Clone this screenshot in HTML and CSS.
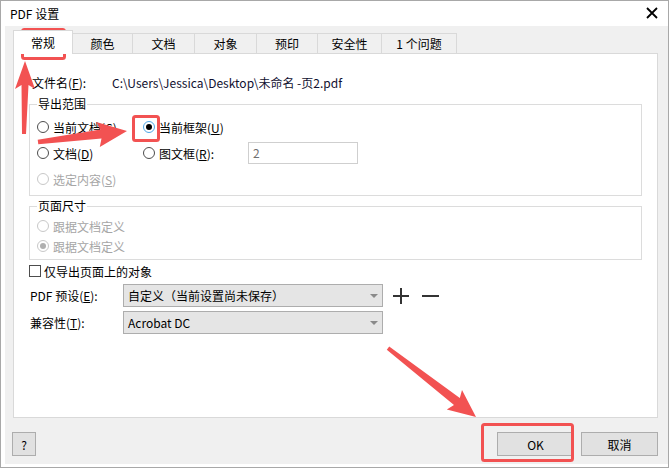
FILE: index.html
```html
<!DOCTYPE html>
<html lang="zh-CN">
<head>
    <meta charset="UTF-8">
    <title>PDF 设置</title>
    <link rel="stylesheet" href="styles.css">
</head>
<body>
    <div class="window">
        <div class="titlebar">
            <span class="title">PDF 设置</span>
            <svg class="close" width="12" height="12" viewBox="0 0 12 12">
                <path d="M1 1 L11 11 M11 1 L1 11" stroke="#000" stroke-width="1.8" fill="none"/>
            </svg>
        </div>
        <div class="client">
            <div class="tabs">
                <div class="tab active" style="width:60px">常规</div>
                <div class="tab" style="width:61px">颜色</div>
                <div class="tab" style="width:63px">文档</div>
                <div class="tab" style="width:63px">对象</div>
                <div class="tab" style="width:62px">预印</div>
                <div class="tab" style="width:65px">安全性</div>
                <div class="tab" style="width:76px">1 个问题</div>
            </div>
            <div class="panel">
                <div class="file-row">
                    <span class="file-label">文件名(<u>F</u>):</span>
                    <span class="path">C:\Users\Jessica\Desktop\未命名 -页2.pdf</span>
                </div>

                <fieldset class="group range">
                    <legend>导出范围</legend>
                    <div class="opt-row">
                        <label class="radio col1"><span class="circle"></span>当前文档(<u>C</u>)</label>
                        <label class="radio checked focus"><span class="circle"></span>当前框架(<u>U</u>)</label>
                    </div>
                    <div class="opt-row">
                        <label class="radio col1"><span class="circle"></span>文档(<u>D</u>)</label>
                        <label class="radio frame"><span class="circle"></span>图文框(<u>R</u>):</label>
                        <div class="textbox">2</div>
                    </div>
                    <div class="opt-row">
                        <label class="radio disabled"><span class="circle"></span>选定内容(<u>S</u>)</label>
                    </div>
                </fieldset>

                <fieldset class="group size">
                    <legend>页面尺寸</legend>
                    <div class="opt-row small">
                        <label class="radio disabled"><span class="circle"></span>跟据文档定义</label>
                    </div>
                    <div class="opt-row small">
                        <label class="radio disabled checked"><span class="circle"></span>跟据文档定义</label>
                    </div>
                </fieldset>

                <label class="check-row"><span class="checkbox"></span>仅导出页面上的对象</label>

                <div class="field-row preset">
                    <span class="field-label">PDF 预设(<u>E</u>):</span>
                    <div class="select"><span>自定义（当前设置尚未保存）</span><span class="arrow"></span></div>
                    <svg class="tool" width="16" height="16" viewBox="0 0 16 16">
                        <path d="M0 8 H16 M8 0 V16" stroke="#333" stroke-width="2"/>
                    </svg>
                    <svg class="tool" width="17" height="16" viewBox="0 0 17 16">
                        <path d="M0 8 H17" stroke="#333" stroke-width="2"/>
                    </svg>
                </div>
                <div class="field-row compat">
                    <span class="field-label">兼容性(<u>T</u>):</span>
                    <div class="select"><span>Acrobat DC</span><span class="arrow"></span></div>
                </div>
            </div>
            <div class="buttons">
                <button class="btn help">?</button>
                <div class="spacer"></div>
                <button class="btn">OK</button>
                <button class="btn">取消</button>
            </div>
        </div>

        <!-- screenshot annotations -->
        <svg class="marks" width="669" height="468" viewBox="0 0 669 468">
            <g fill="none" stroke="#f25252" stroke-width="3">
                <rect x="22.5" y="29.5" width="42" height="29" rx="2"/>
                <rect x="133.5" y="116.5" width="25" height="24" rx="2"/>
                <rect x="482.5" y="424.5" width="90" height="36" rx="2"/>
            </g>
            <g fill="#f25252">
                <polygon points="25,61 35,89 28.5,85 26,134 22,134 21.5,85 15,89"/>
                <polygon points="127,131 99.8,146.9 101.5,138.6 38.3,144.2 37.7,139.8 100.4,129.6 96.3,122.1"/>
                <polygon points="476,417 446.8,409.5 454,405 386.8,349.8 389.2,346.6 459.8,398 462,390"/>
            </g>
        </svg>
    </div>
</body>
</html>
```

FILE: styles.css
```css
body {
    margin: 0;
    font-family: "Noto Sans CJK SC", "Noto Sans", sans-serif;
    font-size: 12px;
    color: #000;
}
.window {
    position: relative;
    width: 669px;
    height: 468px;
    box-sizing: border-box;
    border: 1px solid #a8a8a8;
    background-color: #fff;
    display: flex;
    flex-direction: column;
}
.titlebar {
    height: 25px;
    display: flex;
    align-items: center;
    justify-content: space-between;
    padding: 0 10px 0 9px;
}
.title {
    font-size: 12px;
}
.close {
    margin-top: -1px;
}
.client {
    flex: 1;
    margin: 0 0 3px 4px;
    background-color: #f0f0f0;
    padding: 4px 10px 0 8px;
    display: flex;
    flex-direction: column;
}
.tabs {
    display: flex;
    align-items: flex-start;
    height: 24px;
}
.tab {
    box-sizing: border-box;
    height: 21px;
    margin-top: 3px;
    margin-left: -1px;
    border: 1px solid #d9d9d9;
    border-bottom: none;
    background-color: #f0f0f0;
    text-align: center;
    line-height: 19px;
}
.tab.active {
    position: relative;
    z-index: 1;
    height: 24px;
    margin-top: 0;
    margin-left: 0;
    background-color: #fff;
    line-height: 24px;
}
.panel {
    box-sizing: border-box;
    height: 365px;
    margin-top: -1px;
    border: 1px solid #d9d9d9;
    background-color: #fff;
}
.file-row {
    display: flex;
    height: 16px;
    line-height: 16px;
    margin: 21px 0 0 18px;
}
.file-label {
    width: 80px;
}
.path {
    color: #101030;
}
.group {
    box-sizing: border-box;
    width: 613px;
    margin: 0 0 0 15px;
    padding: 2px 7px 3px 7px;
    border: 1px solid #dcdcdc;
    min-inline-size: 0;
}
.group legend {
    padding: 0 1px;
    line-height: 16px;
}
.range {
    margin-top: 5px;
}
.size {
    margin-top: 2px;
}
.opt-row {
    display: flex;
    align-items: center;
    height: 26px;
}
.opt-row.small {
    height: 20px;
}
.radio {
    display: flex;
    align-items: center;
}
.radio .circle {
    box-sizing: border-box;
    width: 12px;
    height: 12px;
    margin-right: 4px;
    border: 1px solid #4d4d4d;
    border-radius: 50%;
    background-color: #fff;
    display: flex;
    align-items: center;
    justify-content: center;
}
.radio.checked .circle::after {
    content: "";
    width: 6px;
    height: 6px;
    border-radius: 50%;
    background-color: #000;
}
.radio.focus .circle {
    border-color: #4ea6e6;
}
.radio.disabled {
    color: #a6a6a6;
}
.radio.disabled .circle {
    border-color: #c8c8c8;
}
.radio.disabled.checked .circle::after {
    background-color: #b0b0b0;
}
.col1 {
    width: 106px;
}
.frame {
    width: 105px;
}
.textbox {
    box-sizing: border-box;
    width: 110px;
    height: 22px;
    border: 1px solid #cfcfcf;
    padding-left: 4px;
    line-height: 20px;
    color: #707070;
}
.check-row {
    display: flex;
    align-items: center;
    height: 16px;
    margin: 3px 0 0 15px;
}
.checkbox {
    box-sizing: border-box;
    width: 12px;
    height: 12px;
    margin-right: 3px;
    border: 1px solid #4d4d4d;
    background-color: #fff;
}
.field-row {
    display: flex;
    align-items: center;
    margin-left: 16px;
}
.preset {
    margin-top: 5px;
}
.compat {
    margin-top: 4px;
}
.field-label {
    width: 93px;
}
.select {
    box-sizing: border-box;
    width: 260px;
    height: 23px;
    border: 1px solid #adadad;
    background-color: #e5e5e5;
    padding: 0 4px 0 4px;
    display: flex;
    align-items: center;
    justify-content: space-between;
}
.arrow {
    width: 0;
    height: 0;
    border-left: 4px solid transparent;
    border-right: 4px solid transparent;
    border-top: 4px solid #8a8a8a;
}
.tool {
    margin-left: 10px;
}
.tool + .tool {
    margin-left: 13px;
}
.buttons {
    display: flex;
    align-items: center;
    height: 24px;
    margin-top: 14px;
}
.spacer {
    flex: 1;
}
.btn {
    box-sizing: border-box;
    width: 77px;
    height: 24px;
    margin-left: 7px;
    border: 1px solid #adadad;
    background-color: #e1e1e1;
    font-family: "Noto Sans CJK SC", "Noto Sans", sans-serif;
    font-size: 12px;
    color: #000;
    padding: 0;
}
.btn.help {
    width: 24px;
    margin-left: -1px;
}
.marks {
    position: absolute;
    left: -1px;
    top: -1px;
    pointer-events: none;
}
```
